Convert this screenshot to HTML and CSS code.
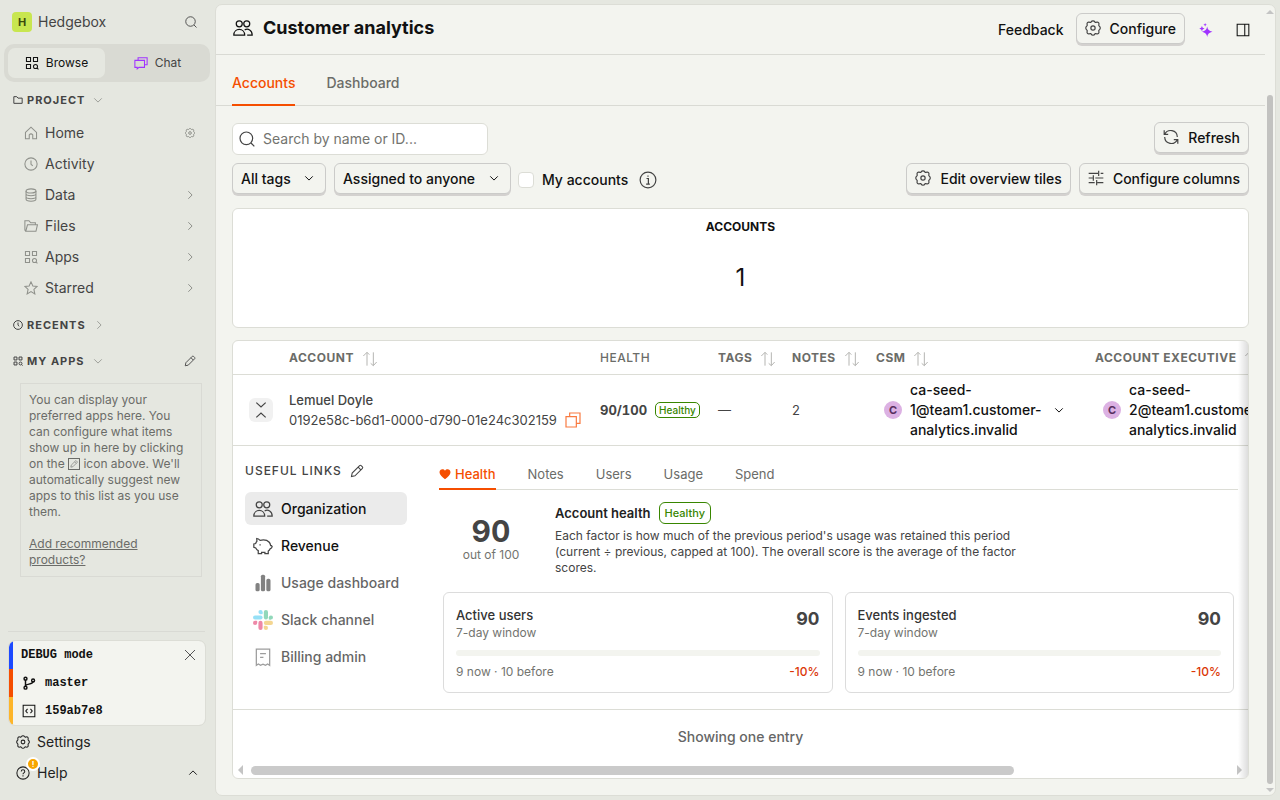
FILE: index.html
```html
<!DOCTYPE html>
<html lang="en">
<head>
<meta charset="utf-8">
<meta name="viewport" content="width=device-width, initial-scale=1">
<title>Customer analytics</title>
<link rel="stylesheet" href="styles.css">
</head>
<body>
<svg class="sprite" aria-hidden="true">
  <symbol id="i-search" viewBox="0 0 24 24"><circle cx="11" cy="11" r="9.500"/><path d="M18 18l5 5"/></symbol>
  <symbol id="i-apps" viewBox="0 0 24 24"><path d="M2.5 2.5h7v7h-7zM14.5 2.5h7v7h-7zM2.5 14.5h7v7h-7z"/><circle cx="18" cy="18" r="3.5"/><path d="m20.5 20.5 2.5 2.5"/></symbol>
  <symbol id="i-chat" viewBox="0 0 24 24"><path d="M7 7V3h15.500v12H18M1.500 7.500H18v12H8.500L5.500 22v-2.500h-4z"/></symbol>
  <symbol id="i-folder" viewBox="0 0 24 24"><path d="M2 20V4h7l3 3.500h10V20z"/></symbol>
  <symbol id="i-folder-open" viewBox="0 0 24 24"><path d="M3 21 1.500 19V3h7l3 3.500h8V10M3 21l3-11h17l-2.500 11z"/></symbol>
  <symbol id="i-down" viewBox="0 0 24 24"><path d="m3 8 9 9 9-9"/></symbol>
  <symbol id="i-up" viewBox="0 0 24 24"><path d="m3 16 9-9 9 9"/></symbol>
  <symbol id="i-right" viewBox="0 0 24 24"><path d="m8 3 9 9-9 9"/></symbol>
  <symbol id="i-home" viewBox="0 0 24 24"><path d="m2.500 11 9.500-9 9.500 9v11H15v-7q-3-3-6 0v7H2.500z"/></symbol>
  <symbol id="i-clock" viewBox="0 0 24 24"><circle cx="12" cy="12" r="10.500"/><path d="M12 6v6.500l3 2.500"/></symbol>
  <symbol id="i-data" viewBox="0 0 24 24"><ellipse cx="12" cy="5" rx="8.500" ry="3.500"/><path d="M3.500 5v14c0 5 17 5 17 0V5M3.500 10c0 4.500 17 4.500 17 0M3.500 15c0 4.500 17 4.500 17 0"/></symbol>
  <symbol id="i-star" viewBox="0 0 24 24"><path d="m12 1.500 3.200 7 7.300.8-5.500 5 1.600 7.700-6.600-4-6.600 4L7 14.300l-5.500-5 7.300-.8z"/></symbol>
  <symbol id="i-pencil" viewBox="0 0 24 24"><path d="m2.500 21.500 1.200-6L16.500 2.700q1.300-1.200 2.600 0l2.200 2.200q1.200 1.300 0 2.600L8.500 20.300zM14 5.500 18.500 10"/></symbol>
  <symbol id="i-gear" viewBox="0 0 24 24"><path d="M12 1.200q2 0 2.600 1.500t2.800.6q1.800-.5 2.900.6 1 1 .5 2.800-.6 2 .8 2.800 1.300.8 1.300 2.500t-1.300 2.500q-1.400.8-.8 2.800.5 1.800-.5 2.800-1.100 1.100-2.900.6-2.200-.9-2.800.6t-2.600 1.500-2.600-1.500-2.800-.6q-1.800.5-2.900-.6-1-1-.5-2.800.6-2-.8-2.800Q1.200 13.700 1.200 12t1.200-2.500q1.400-.8.800-2.800-.5-1.800.5-2.800 1.100-1.100 2.900-.6 2.200.9 2.800-.6T12 1.200z"/><circle cx="12" cy="12" r="3.200"/></symbol>
  <symbol id="i-close" viewBox="0 0 24 24"><path d="m2 2 20 20M22 2 2 22"/></symbol>
  <symbol id="i-branch" viewBox="0 0 24 24"><circle cx="6" cy="4.500" r="2.500"/><circle cx="6" cy="20" r="2.500"/><circle cx="19" cy="7.500" r="2.500"/><path d="M6 7v10.500M19 10c0 5-13 3-13 7"/></symbol>
  <symbol id="i-code" viewBox="0 0 24 24"><path d="M2 2h20v20H2zM9.500 8.500 6.500 12l3 3.500M14.500 8.500l3 3.500-3 3.500"/></symbol>
  <symbol id="i-help" viewBox="0 0 24 24"><circle cx="12" cy="12" r="10.500"/><path d="M9 9.500c0-4 6-4 6 0 0 2.500-3 2-3 4.500M12 16v2"/></symbol>
  <symbol id="i-people" viewBox="0 0 24 24"><circle cx="7.500" cy="7" r="3.600"/><circle cx="16.500" cy="7" r="3.600"/><path d="M1 20.500c0-9 13-9 13 0zM14 14.200c4-2 9 .3 9 6.300h-6"/></symbol>
  <symbol id="i-spark" viewBox="0 0 24 24"><path d="M14 6q.8 7.200 9 9-8.200 1.500-9 9-.8-7.500-9-9 8.200-1.800 9-9zM5 5q.4 3.600 4.500 4.500Q5.400 10.400 5 14q-.4-3.600-4.500-4.500Q4.600 8.600 5 5zM10.500 0q.3 2.400 3 3-2.700.6-3 3-.3-2.400-3-3 2.700-.6 3-3z"/></symbol>
  <symbol id="i-panel" viewBox="0 0 24 24"><path d="M2 2h20v20H2zM15 2v20"/></symbol>
  <symbol id="i-refresh" viewBox="0 0 24 24"><path d="M1.800 2v6h6M2.500 8C7-1 21 1 21.500 12M22.200 22v-6h-6M21.500 16C17 25 3 23 2.500 12"/></symbol>
  <symbol id="i-tune" viewBox="0 0 24 24"><path d="M1 5h14M19 5h4M16 1v8M1 12h6M11 12h12M8 8v8M1 19h9M14 19h9M13 15v8"/></symbol>
  <symbol id="i-info" viewBox="0 0 24 24"><circle cx="12" cy="12" r="10.500"/><path d="M10 10h2.500v7.500M9.500 17.500h5M12 6v1.800"/></symbol>
  <symbol id="i-sort" viewBox="0 0 24 24"><path d="M7.500 22V2M2 7.500 7.500 2 11 5.500M17 2v20M22 16.500 17 22l-4-3.500"/></symbol>
  <symbol id="i-collapse" viewBox="0 0 24 24"><path d="m5 1 7 6.500L19 1M5 23l7-6.500 7 6.500"/></symbol>
  <symbol id="i-copy" viewBox="0 0 24 24"><path d="M1.500 7h15.500v15.500H1.500zM7 7V1.500h15.500V17H17"/></symbol>
  <symbol id="i-piggy" viewBox="0 0 24 24"><path d="M4.500 3q2 .2 4 2.200 7.500-1.500 11 2.300 1.300 1.500 1.500 3.500.3.800 1.200.6l.8 1.200q-.5 2.200-2.200 2.200-.8 2-2.500 3V21h-4v-1.500h-4V21h-4v-3.500q-2-1-3-3.200l-2.300-.8v-4L3.200 9q.3-1.500 1.500-2.700zM8.500 10v1.500"/></symbol>
  <symbol id="i-bars" viewBox="0 0 24 24"><rect x="3" y="12" width="5" height="10" rx="2"/><rect x="9.500" y="2" width="5" height="20" rx="2"/><rect x="16" y="7" width="5" height="15" rx="2"/></symbol>
  <symbol id="i-receipt" viewBox="0 0 24 24"><path d="M4 2.500h16v19.500l-2.500-1.500-2.500 1.500-3-1.500-3 1.500-2.500-1.500L4 22zM8.500 8h7M8.500 12.500h4"/></symbol>
  <symbol id="i-heart" viewBox="0 0 24 24"><path d="M12 22.500C6 18 1 13.500 1 8.500 1 2 9 .5 12 5.500 15 .5 23 2 23 8.500c0 5-5 9.500-11 14z"/></symbol>
</svg>

<aside class="sidebar">
  <header class="brand">
    <span class="brand-logo">H</span>
    <span class="brand-name">Hedgebox</span>
    <button class="plain" aria-label="Search"><svg class="ic ic12"><use href="#i-search"/></svg></button>
  </header>
  <div class="switch">
    <button class="switch-item on"><svg class="ic ic14"><use href="#i-apps"/></svg>Browse</button>
    <button class="switch-item"><svg class="ic ic14 violet"><use href="#i-chat"/></svg>Chat</button>
  </div>
  <button class="section"><svg class="ic ic10"><use href="#i-folder"/></svg>PROJECT<svg class="ic ic10 pale"><use href="#i-down"/></svg></button>
  <nav class="menu">
    <a href="#"><svg class="ic ic14"><use href="#i-home"/></svg>Home<svg class="ic ic10 end"><use href="#i-gear"/></svg></a>
    <a href="#"><svg class="ic ic14"><use href="#i-clock"/></svg>Activity</a>
    <a href="#"><svg class="ic ic14"><use href="#i-data"/></svg>Data<svg class="ic ic10 end"><use href="#i-right"/></svg></a>
    <a href="#"><svg class="ic ic14"><use href="#i-folder-open"/></svg>Files<svg class="ic ic10 end"><use href="#i-right"/></svg></a>
    <a href="#"><svg class="ic ic14"><use href="#i-apps"/></svg>Apps<svg class="ic ic10 end"><use href="#i-right"/></svg></a>
    <a href="#"><svg class="ic ic14"><use href="#i-star"/></svg>Starred<svg class="ic ic10 end"><use href="#i-right"/></svg></a>
  </nav>
  <button class="section recents"><svg class="ic ic10"><use href="#i-clock"/></svg>RECENTS<svg class="ic ic10 pale"><use href="#i-right"/></svg></button>
  <div class="section-row">
    <button class="section"><svg class="ic ic10"><use href="#i-apps"/></svg>MY APPS<svg class="ic ic10 pale"><use href="#i-down"/></svg></button>
    <button class="plain" aria-label="Edit my apps"><svg class="ic ic12"><use href="#i-pencil"/></svg></button>
  </div>
  <div class="hint">
    You can display your preferred apps here. You can configure what items show up in here by clicking on the <svg class="ic boxed"><use href="#i-pencil"/></svg> icon above. We'll automatically suggest new apps to this list as you use them.<br><br><a href="#">Add recommended products?</a>
  </div>
  <footer class="side-foot">
    <div class="debug">
      <div class="debug-row blue">DEBUG mode<button class="plain" aria-label="Close"><svg class="ic ic12"><use href="#i-close"/></svg></button></div>
      <div class="debug-row red"><svg class="ic ic14 bold"><use href="#i-branch"/></svg>master</div>
      <div class="debug-row amber"><svg class="ic ic14"><use href="#i-code"/></svg>159ab7e8</div>
    </div>
    <a class="foot-link" href="#"><svg class="ic ic14"><use href="#i-gear"/></svg>Settings</a>
    <a class="foot-link" href="#"><span class="help-icon"><svg class="ic ic14"><use href="#i-help"/></svg><span class="alert">!</span></span>Help<svg class="ic ic10 end"><use href="#i-up"/></svg></a>
  </footer>
</aside>

<main class="main">
  <div class="content">
    <header class="page-head">
      <svg class="ic ic20"><use href="#i-people"/></svg>
      <h1>Customer analytics</h1>
      <button class="plain strong">Feedback</button>
      <button class="btn"><svg class="ic ic16"><use href="#i-gear"/></svg>Configure</button>
      <button class="plain tool" aria-label="AI assistant"><svg class="fill ic14 violet"><use href="#i-spark"/></svg></button>
      <button class="plain tool" aria-label="Side panel"><svg class="ic ic14"><use href="#i-panel"/></svg></button>
    </header>
    <nav class="tabs">
      <a class="on" href="#">Accounts</a>
      <a href="#">Dashboard</a>
    </nav>
    <div class="body">
      <div class="bar">
        <label class="search"><svg class="ic ic16"><use href="#i-search"/></svg><input type="text" placeholder="Search by name or ID..." aria-label="Search accounts"></label>
        <button class="btn end"><svg class="ic ic16"><use href="#i-refresh"/></svg>Refresh</button>
      </div>
      <div class="bar filters">
        <div class="pick"><select class="btn" aria-label="Tags"><option>All tags</option></select><svg class="ic ic10"><use href="#i-down"/></svg></div>
        <div class="pick"><select class="btn" aria-label="Assignee"><option>Assigned to anyone</option></select><svg class="ic ic10"><use href="#i-down"/></svg></div>
        <label class="check"><input type="checkbox">My accounts</label>
        <svg class="ic info"><use href="#i-info"/></svg>
        <button class="btn end"><svg class="ic ic16"><use href="#i-gear"/></svg>Edit overview tiles</button>
        <button class="btn"><svg class="ic ic16"><use href="#i-tune"/></svg>Configure columns</button>
      </div>
      <section class="tile"><h2>ACCOUNTS</h2><p>1</p></section>
      <section class="grid">
        <div class="scroller">
          <table>
            <colgroup><col class="c-toggle"><col class="c-account"><col class="c-health"><col class="c-tags"><col class="c-notes"><col class="c-user"><col class="c-user"><col class="c-rest"></colgroup>
            <thead><tr>
              <th></th>
              <th>ACCOUNT<svg class="ic ic16 sort"><use href="#i-sort"/></svg></th>
              <th class="light">HEALTH</th>
              <th>TAGS<svg class="ic ic16 sort"><use href="#i-sort"/></svg></th>
              <th>NOTES<svg class="ic ic16 sort"><use href="#i-sort"/></svg></th>
              <th>CSM<svg class="ic ic16 sort"><use href="#i-sort"/></svg></th>
              <th>ACCOUNT EXECUTIVE<svg class="ic ic16 sort"><use href="#i-sort"/></svg></th>
              <th></th>
            </tr></thead>
            <tbody>
              <tr class="account">
                <td class="toggle-cell"><button class="toggle" aria-label="Collapse row"><svg class="ic ic16"><use href="#i-collapse"/></svg></button></td>
                <td><div class="name">Lemuel Doyle</div><div class="uid">0192e58c-b6d1-0000-d790-01e24c302159<button class="plain" aria-label="Copy ID"><svg class="ic ic16 orange"><use href="#i-copy"/></svg></button></div></td>
                <td><div class="health"><b>90/100</b><span class="tag small">Healthy</span></div></td>
                <td>—</td>
                <td>2</td>
                <td><button class="user"><span class="avatar">C</span><span>ca-seed-1@team1.customer-analytics.invalid</span><svg class="ic ic10"><use href="#i-down"/></svg></button></td>
                <td><button class="user"><span class="avatar">C</span><span>ca-seed-2@team1.customer-analytics.invalid</span><svg class="ic ic10"><use href="#i-down"/></svg></button></td>
                <td></td>
              </tr>
              <tr>
                <td class="detail-cell" colspan="8">
                  <div class="detail">
                    <div class="links">
                      <h3>USEFUL LINKS<button class="plain" aria-label="Edit links"><svg class="ic ic14"><use href="#i-pencil"/></svg></button></h3>
                      <a class="on" href="#"><svg class="ic ic20"><use href="#i-people"/></svg>Organization</a>
                      <a href="#"><svg class="ic ic20"><use href="#i-piggy"/></svg>Revenue</a>
                      <a class="off" href="#"><svg class="fill ic20"><use href="#i-bars"/></svg>Usage dashboard</a>
                      <a class="off" href="#"><svg class="ic20" viewBox="0 0 24 24"><g fill="#36c5f0"><circle cx="9" cy="2.500" r="2.500"/><path d="M9 2.500h2.500V5H9z"/><rect x="0" y="6.500" width="11.500" height="5" rx="2.500"/></g><g fill="#2eb67d"><rect x="13" y="0" width="5" height="11.500" rx="2.500"/><circle cx="21.500" cy="9" r="2.500"/><path d="M19 9h2.500v2.500H19z"/></g><g fill="#ecb22e"><rect x="13" y="13" width="11" height="5" rx="2.500"/><circle cx="15.500" cy="21.500" r="2.500"/><path d="M13 19h2.500v2.500H13z"/></g><g fill="#e01e5a"><rect x="6.500" y="13" width="5" height="11" rx="2.500"/><circle cx="2.500" cy="15.500" r="2.500"/><path d="M2.500 13H5v2.500H2.500z"/></g></svg>Slack channel</a>
                      <a class="off" href="#"><svg class="ic ic20"><use href="#i-receipt"/></svg>Billing admin</a>
                    </div>
                    <div class="panel">
                      <nav class="subtabs">
                        <a class="on" href="#"><svg class="fill ic12"><use href="#i-heart"/></svg>Health</a>
                        <a href="#">Notes</a><a href="#">Users</a><a href="#">Usage</a><a href="#">Spend</a>
                      </nav>
                      <div class="score">
                        <div class="score-num"><strong>90</strong><span>out of 100</span></div>
                        <div class="score-text">
                          <h4>Account health<span class="tag">Healthy</span></h4>
                          <p>Each factor is how much of the previous period's usage was retained this period (current ÷ previous, capped at 100). The overall score is the average of the factor scores.</p>
                        </div>
                      </div>
                      <div class="cards">
                        <article class="card">
                          <div class="line"><div><h5>Active users</h5><p>7-day window</p></div><strong>90</strong></div>
                          <div class="meter"></div>
                          <div class="line foot"><span>9 now · 10 before</span><span class="down">-10%</span></div>
                        </article>
                        <article class="card">
                          <div class="line"><div><h5>Events ingested</h5><p>7-day window</p></div><strong>90</strong></div>
                          <div class="meter"></div>
                          <div class="line foot"><span>9 now · 10 before</span><span class="down">-10%</span></div>
                        </article>
                      </div>
                    </div>
                  </div>
                </td>
              </tr>
            </tbody>
          </table>
        </div>
        <p class="count">Showing one entry</p>
        <div class="hbar"><span class="arrow left"></span><span class="track"><span class="thumb"></span></span><span class="arrow right"></span></div>
      </section>
    </div>
  </div>
  <div class="vbar"><span class="arrow top"></span><span class="track"><span class="thumb"></span></span><span class="arrow bottom"></span></div>
</main>
</body>
</html>
```

FILE: styles.css
```css
* { box-sizing: border-box; }
body {
  margin: 0;
  height: 100vh;
  display: flex;
  overflow: hidden;
  background: #e5e7e0;
  color: #111;
  font: 14px/20px Inter, sans-serif;
}
h1, h2, h3, h4, h5, p { margin: 0; }
a { color: inherit; text-decoration: none; }
button { font: inherit; color: inherit; cursor: pointer; }
.sprite { display: none; }

/* icons */
.ic { fill: none; stroke: currentColor; stroke-width: 1.8; flex: none; width: 16px; height: 16px; }
.fill { fill: currentColor; stroke: none; flex: none; }
.ic10 { width: 10px; height: 10px; stroke-width: 2.4; }
.ic12 { width: 12px; height: 12px; }
.ic14 { width: 14px; height: 14px; }
.ic16 { width: 16px; height: 16px; }
.ic20 { width: 20px; height: 20px; flex: none; stroke-width: 1.5; }
.bold { stroke-width: 2.5; }
.violet { color: #a033ff; }
.orange { color: #f97a40; }
.pale { color: #9fa19b; }
.end { margin-left: auto; }
.plain { background: none; border: 0; padding: 0; display: flex; align-items: center; }

/* sidebar */
.sidebar { width: 215px; flex: none; display: flex; flex-direction: column; color: #444; }
.brand { display: flex; align-items: center; gap: 6px; height: 44px; padding: 0 18px 0 12px; }
.brand .plain { margin-left: auto; }
.brand-logo {
  width: 20px; height: 20px; border-radius: 4px; background: #c8e650; color: #3b4a0d;
  font-size: 11px; font-weight: 700; text-align: center;
}
.switch { display: flex; gap: 4px; margin: 0 5px 0 4px; padding: 4px; border-radius: 10px; background: #d9dad3; }
.switch-item {
  flex: 1; height: 30px; display: flex; align-items: center; justify-content: center; gap: 7px;
  border: 0; border-radius: 7px; background: none; font-size: 12px;
}
.switch-item.on { background: #e5e7e0; color: #111; }
.section {
  display: flex; align-items: center; gap: 4px; height: 36px; padding: 0 13px; border: 0; background: none;
  font-size: 11px; font-weight: 700; letter-spacing: 1px; text-align: left;
}
.section .pale { margin-left: 4px; }
.menu { display: flex; flex-direction: column; gap: 1px; }
.menu a { display: flex; align-items: center; gap: 7px; height: 30px; padding: 0 20px 0 24px; }
.menu .ic { color: #8f918b; }
.menu .end { margin-left: auto; }
.recents { margin-top: 4px; }
.section-row { display: flex; justify-content: space-between; padding-right: 19px; }
.hint {
  margin: 4px 13px 0 20px; padding: 8px; border: 1px solid #d9dad4;
  color: #6b6c68; font-size: 12px; line-height: 16px;
}
.hint a { text-decoration: underline; }
.boxed { width: 12px; height: 12px; border: 1px solid; padding: 1px; vertical-align: -2px; }
.side-foot { margin: auto 10px 12px 8px; padding-top: 9px; border-top: 1px solid #d9dad4; }
.debug {
  margin: 0 0 1px 1px; border-radius: 6px; overflow: hidden; background: #f3f4ef; outline: 1px solid #dcddd6; color: #111;
  font: bold 12px/28px "Liberation Mono", monospace;
}
.debug-row { display: flex; align-items: center; gap: 9px; height: 28px; padding: 0 9px; border-left: 4px solid; }
.debug-row .plain { margin-left: auto; color: #444; }
.debug-row.blue { border-left-color: #1d4aff; padding-left: 8px; }
.debug-row.red { border-left-color: #f54e00; }
.debug-row.amber { border-left-color: #fdb52a; }
.foot-link { display: flex; align-items: center; gap: 7px; height: 31px; padding: 0 7px 0 8px; color: #222; }
.help-icon { position: relative; display: flex; }
.alert {
  position: absolute; left: 10px; top: -9px; width: 14px; height: 14px; border: 2px solid #fff; border-radius: 50%;
  background: #f7a501; color: #fff; font-size: 8px; font-weight: 700; line-height: 10px; text-align: center;
}

/* main frame */
.main {
  flex: 1; min-width: 0; display: flex; margin: 4px 4px 4px 0; border: 1px solid #dcddd6; border-radius: 7px;
  background: #f3f4ef; overflow: hidden;
}
.content { flex: 1; min-width: 0; display: flex; flex-direction: column; }
.page-head { display: flex; align-items: center; height: 50px; flex: none; padding: 0 8px 0 17px; border-bottom: 1px solid #d9dad4; }
h1 { margin: 0 auto 3px 10px; font-size: 18px; line-height: 24px; font-weight: 700; }
.page-head > .ic20 { margin-bottom: 3px; }
.strong { font-weight: 500; margin-right: 12px; }
.tool { width: 28px; justify-content: center; margin-left: 7px; }
.tool + .tool { margin-left: 9px; }
.btn {
  display: inline-flex; align-items: center; gap: 9px; height: 31px; margin: 0 0 2px; padding: 1px 8px 0;
  border: 1px solid #cbcbc9; border-radius: 6px; background: #f3f4ef; box-shadow: 0 2px 0 #d3d1cf;
  font: 500 14px/20px Inter, sans-serif; color: #111;
}
.btn .ic { color: #444; margin-bottom: 2px; }
.tabs { display: flex; align-items: flex-end; gap: 31px; height: 51px; flex: none; padding: 0 16px; border-bottom: 1px solid #d9dad4; color: #6b6c68; font-weight: 500; }
.tabs a { height: 44px; margin-bottom: -1px; padding: 11px 0; border-bottom: 2px solid transparent; }
.tabs .on, .subtabs .on { color: #f54e00; border-bottom-color: #f54e00; }
.body { flex: 1; min-height: 0; display: flex; flex-direction: column; padding: 16px; }
.bar { display: flex; align-items: center; gap: 8px; }
.bar .end { margin-left: auto; }
.filters { margin-top: 8px; }
.search { display: flex; align-items: center; gap: 8px; width: 256px; height: 32px; padding: 0 6px; border: 1px solid #dcddd6; border-radius: 6px; background: #fff; color: #444; }
.search input { flex: 1; min-width: 0; border: 0; padding: 0; outline: 0; background: none; font: inherit; }
.search input::placeholder { color: #73746f; opacity: 1; }
.pick { display: grid; align-items: center; }
.pick > * { grid-area: 1 / 1; }
.pick select { appearance: none; padding-right: 34px; }
.pick .ic { justify-self: end; margin: 0 12px 3px 0; pointer-events: none; }
.check { display: flex; align-items: center; gap: 8px; margin-left: -1px; font-weight: 500; }
.check input { appearance: none; width: 16px; height: 16px; margin: 0; border: 1px solid #dcddd6; border-radius: 4px; background: #fff; }
.info { width: 18px; height: 18px; margin-left: 3px; color: #444; stroke-width: 1.6; }

.tile { height: 120px; flex: none; margin-top: 12px; padding-top: 8px; border: 1px solid #dcddd6; border-radius: 6px; background: #fff; text-align: center; }
.tile h2 { font-size: 12px; line-height: 20px; font-weight: 700; }
.tile p { margin-top: 25px; font-size: 24px; line-height: 32px; }

/* accounts table */
.grid { position: relative; flex: none; margin-top: 12px; border: 1px solid #dcddd6; border-radius: 6px; background: #fff; overflow: hidden; container-type: inline-size; }
.grid::after { content: ""; position: absolute; inset: 0 0 0 auto; width: 10px; background: linear-gradient(to right, transparent, #0002); pointer-events: none; }
.scroller { overflow: hidden; }
table { width: 1303px; table-layout: fixed; border-collapse: collapse; font-size: 13px; color: #444; }
.c-toggle { width: 48px; }
.c-account { width: 311px; }
.c-health { width: 118px; }
.c-tags { width: 74px; }
.c-notes { width: 84px; }
.c-user { width: 219px; }
th { height: 33px; padding: 2px 8px 0; border-bottom: 1px solid #dcddd6; text-align: left; white-space: nowrap; font-size: 12px; font-weight: 700; letter-spacing: 0.5px; color: #6b6c68; }
.light { font-weight: 500; }
.sort { vertical-align: middle; margin-left: 8px; color: #b5b5b2; stroke-width: 1.5; }
td { padding: 0 8px; }
.account td { height: 71px; border-bottom: 1px solid #dcddd6; }
.toggle { display: flex; align-items: center; justify-content: center; width: 24px; height: 24px; margin-left: 8px; border: 0; border-radius: 6px; background: #f1f1f1; padding: 0; }
.name { font-weight: 500; }
.uid { display: flex; gap: 8px; white-space: nowrap; }
.health { display: flex; align-items: center; gap: 8px; font-variant-numeric: tabular-nums; }
.tag { padding: 2px 5px; border: 1px solid #388600; border-radius: 6px; color: #388600; font-size: 11px; line-height: 16px; font-weight: 500; }
.tag.small { padding: 0 3px; font-size: 10px; line-height: 14px; border-radius: 5px; }
.user { display: flex; align-items: center; gap: 8px; width: 100%; padding: 0 15px 0 8px; border: 0; background: none; font-size: 14px; font-weight: 500; color: #111; text-align: left; }
.user span:nth-child(2) { flex: 1; }
.avatar { width: 18px; height: 18px; flex: none; border-radius: 50%; background: #dcb1e3; color: #572e5e; font-size: 11px; line-height: 18px; font-weight: 700; text-align: center; }
.detail-cell { padding: 0; border-bottom: 1px solid #dcddd6; }
.detail { width: 100cqw; display: flex; gap: 32px; padding: 12px 10px 16px 12px; }
.links { width: 162px; flex: none; display: flex; flex-direction: column; gap: 4px; font-size: 14px; font-weight: 500; color: #111; }
.links h3 { display: flex; align-items: center; gap: 8px; height: 26px; margin-bottom: 4px; font-size: 12px; font-weight: 500; letter-spacing: 1px; color: #444; }
.links a { display: flex; align-items: center; gap: 8px; height: 33px; padding: 1px 8px 0; border-radius: 6px; white-space: nowrap; }
.links a.on { background: #ebebeb; }
.links .ic { color: #444; }
.links .off { opacity: 0.65; }
.links .off svg { opacity: 0.8; }
.panel { flex: 1; min-width: 0; }
.subtabs { display: flex; gap: 32px; height: 32px; border-bottom: 1px solid #dcddd6; color: #6b6c68; }
.subtabs a { display: flex; align-items: center; gap: 4px; height: 32px; padding-top: 2px; border-bottom: 2px solid transparent; }
.subtabs .on { font-weight: 500; }
.score { display: flex; margin: 12px 4px 0; gap: 16px; }
.score-num { width: 96px; display: flex; flex-direction: column; justify-content: center; text-align: center; }
.score-num strong { font-size: 30px; line-height: 32px; font-variant-numeric: tabular-nums; }
.score-num span { font-size: 12px; line-height: 16px; color: #73746f; }
.score-text p { max-width: 480px; margin-top: 4px; font-size: 12px; line-height: 16px; }
h4 { display: flex; align-items: center; gap: 8px; font-size: 13px; font-weight: 600; color: #222; }
.cards { display: grid; grid-template-columns: 1fr 1fr; gap: 12px; margin: 16px 4px 0; }
.card { padding: 12px; border: 1px solid #dcdcdc; border-radius: 6px; font-size: 12px; line-height: 16px; color: #73746f; }
.line { display: flex; justify-content: space-between; }
.line strong { font-size: 18px; line-height: 28px; color: #444; font-variant-numeric: tabular-nums; }
h5 { font-size: 13px; line-height: 20px; font-weight: 500; color: #333; }
.meter { height: 6px; margin: 9px 0 8px; border-radius: 3px; background: #f3f4ef; }
.down { color: #db3707; font-weight: 500; }
.count { padding: 17px 0 18px; text-align: center; font-weight: 500; color: #666; }

/* scrollbars */
.arrow { width: 0; height: 0; border: 4px solid transparent; flex: none; }
.arrow.left { border-width: 5px; border-right-color: #c4c4c4; border-left: 0; }
.arrow.right { border-width: 5px; border-left-color: #c4c4c4; border-right: 0; }
.arrow.top { border-bottom-color: #c4c4c4; border-top: 0; }
.arrow.bottom { border-top-color: #c4c4c4; border-bottom: 0; }
.track { flex: 1; display: flex; }
.thumb { background: #cacaca; border-radius: 5px; }
.hbar { display: flex; align-items: center; gap: 8px; height: 13px; padding: 0 6px 2px 5px; }
.hbar .track { height: 9px; }
.hbar .thumb { width: 78%; }
.vbar { width: 10px; flex: none; display: flex; flex-direction: column; align-items: center; padding: 5px 0 3px; gap: 4px; }
.vbar .track { width: 6px; flex-direction: column; justify-content: flex-end; }
.vbar .thumb { height: 90%; background: #c2c2c0; }
```
